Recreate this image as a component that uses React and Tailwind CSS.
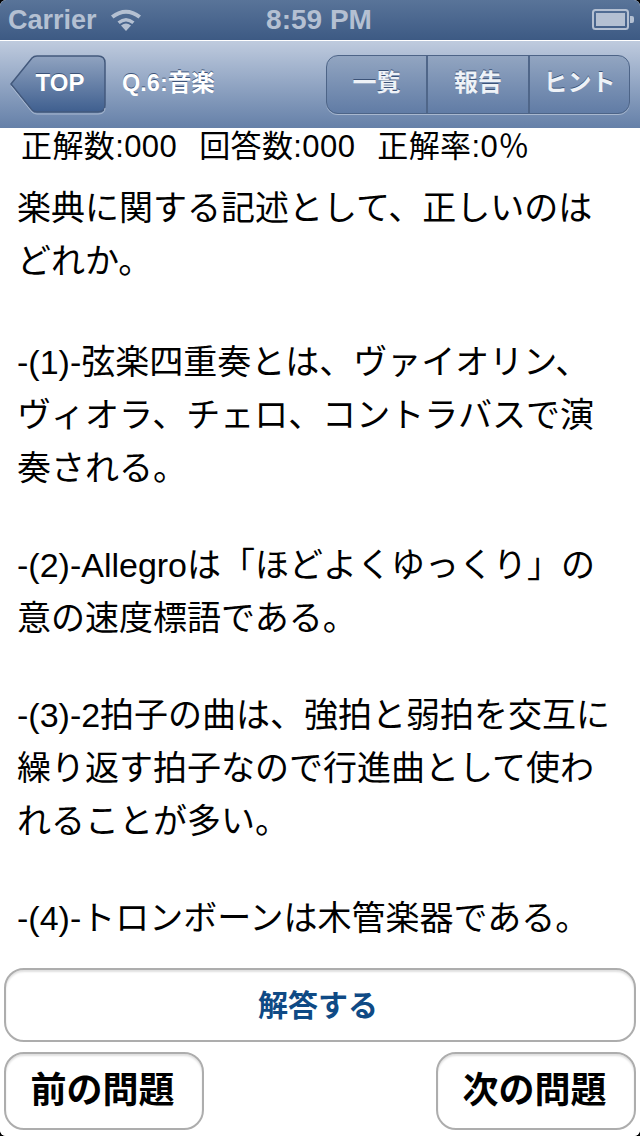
const FONT = "font-['Liberation_Sans','Noto_Sans_CJK_JP',sans-serif]";

function Wifi() {
  return (
    <svg width="32" height="24" viewBox="0 0 32 24" className="ml-[13px]">
      <path d="M16 23 L11 17.5 Q16 13.5 21 17.5 Z" fill="#b4c0d2" />
      <path d="M7.5 13.5 Q16 6.5 24.5 13.5 L22.3 16 Q16 11 9.7 16 Z" fill="#b4c0d2" />
      <path d="M1 7.5 Q16 -4 31 7.5 L28.5 10.5 Q16 1 3.5 10.5 Z" fill="#b4c0d2" />
    </svg>
  );
}

function Battery() {
  return (
    <svg width="42" height="22" viewBox="0 0 42 22">
      <rect x="1" y="1" width="35" height="19" rx="2.5" fill="none" stroke="#b4c0d2" strokeWidth="2" />
      <rect x="4" y="4" width="29" height="13" fill="#b4c0d2" />
      <path d="M38 7 h2 a2 2 0 0 1 2 2 v3 a2 2 0 0 1 -2 2 h-2 Z" fill="#b4c0d2" />
    </svg>
  );
}

function BackButton() {
  return (
    <div className="relative ml-[10px] flex h-[60px] w-[96px] items-center justify-center">
      <svg width="96" height="60" viewBox="0 0 96 60" className="absolute inset-0">
        <defs>
          <linearGradient id="back" x1="0" y1="0" x2="0" y2="1">
            <stop offset="0" stopColor="#90a3c0" />
            <stop offset="1" stopColor="#3f5f8f" />
          </linearGradient>
        </defs>
        <path d="M1 29 L22 3 Q24 1 27 1 H88 Q95 1 95 8 V50 Q95 57 88 57 H27 Q24 57 22 55 Z" fill="url(#back)" stroke="#43597c" strokeWidth="1.5" />
        <path d="M1 31 L22 57 Q24 59 27 59 H88 Q95 59 95 53" fill="none" stroke="#a9b8cf" strokeWidth="1" />
      </svg>
      <span className="relative ml-[4px] pb-[4px] text-[24px] font-bold text-white [text-shadow:0_-1px_0_#3c5378]">TOP</span>
    </div>
  );
}

function Segment({ label, className }) {
  return (
    <div className={`flex h-full items-center justify-center pb-[3px] text-[24px] font-bold text-[#eef2f7] [text-shadow:0_-1px_0_#3c5378] ${className}`}>
      {label}
    </div>
  );
}

function Para({ lines, className = 'mb-[44px]' }) {
  return (
    <div className={className}>
      {lines.map((l) => (
        <div key={l} className="h-[53px] whitespace-nowrap">{l}</div>
      ))}
    </div>
  );
}

function BottomButton({ label, className }) {
  return (
    <button className={`flex items-center justify-center rounded-[20px] border-2 border-[#adadad] bg-white font-bold shadow-[inset_0_2px_2px_#e0e0e0] ${className}`}>
      {label}
    </button>
  );
}

export default function App() {
  return (
    <div className="h-[1136px] w-[640px] bg-black">
      <div className={`${FONT} flex h-full w-full flex-col overflow-hidden rounded-[6px] bg-white`}>
        <div className="flex h-[40px] shrink-0 items-center justify-between bg-gradient-to-b from-[#597499] to-[#3d5a84] px-[8px] text-[#b4c0d2]">
          <div className="flex w-[180px] items-center">
            <span className="text-[27px] font-bold leading-none">Carrier</span>
            <Wifi />
          </div>
          <span className="mr-[4px] text-[28px] font-bold leading-none">8:59 PM</span>
          <div className="mr-[-2px] flex w-[180px] justify-end"><Battery /></div>
        </div>
        <div className="flex h-[88px] shrink-0 items-center border-t border-t-white bg-gradient-to-b from-[#bfcbde] to-[#6580a8]">
          <BackButton />
          <span className="ml-[16px] pb-[1px] text-[23.5px] font-bold text-white [text-shadow:0_-1px_0_#3c5378]">Q.6:音楽</span>
          <div className="ml-auto mr-[10px] flex h-[59px] w-[304px] rounded-[12px] border border-[#4d6487] bg-gradient-to-b from-[#92a5c1] to-[#617ca5] shadow-[0_1px_0_#a9b8cf]">
            <Segment label="一覧" className="w-[101px] border-r-2 border-r-[#4f6689]" />
            <Segment label="報告" className="w-[102px] border-r-2 border-r-[#4f6689]" />
            <Segment label="ヒント" className="flex-1" />
          </div>
        </div>
        <div className="relative min-h-0 flex-1 overflow-hidden text-[34px] text-black">
          <div className="flex h-[36px] items-center whitespace-pre pl-[21px] text-[31px] leading-none tracking-[0.4px] [word-spacing:2px]">
            正解数:000  回答数:000  正解率:0％
          </div>
          <div className="pl-[17px] pt-[18px] leading-[53px]">
            <Para lines={['楽典に関する記述として、正しいのは', 'どれか。']} className="mb-[48px]" />
            <Para lines={['-(1)-弦楽四重奏とは、ヴァイオリン、', 'ヴィオラ、チェロ、コントラバスで演', '奏される。']} />
            <Para lines={['-(2)-Allegroは「ほどよくゆっくり」の', '意の速度標語である。']} />
            <Para lines={['-(3)-2拍子の曲は、強拍と弱拍を交互に', '繰り返す拍子なので行進曲として使わ', 'れることが多い。']} />
            <Para lines={['-(4)-トロンボーンは木管楽器である。']} />
          </div>
        </div>
        <div className="flex shrink-0 flex-col gap-[10px] bg-white px-[4px] pb-[6px] pt-[4px]">
          <BottomButton label="解答する" className="h-[74px] w-full pr-[4px] text-[30px] text-[#0f4a85]" />
          <div className="flex justify-between">
            <BottomButton label="前の問題" className="h-[78px] w-[200px] pr-[3px] text-[36px] text-black" />
            <BottomButton label="次の問題" className="h-[78px] w-[200px] pr-[3px] text-[36px] text-black" />
          </div>
        </div>
      </div>
    </div>
  );
}
